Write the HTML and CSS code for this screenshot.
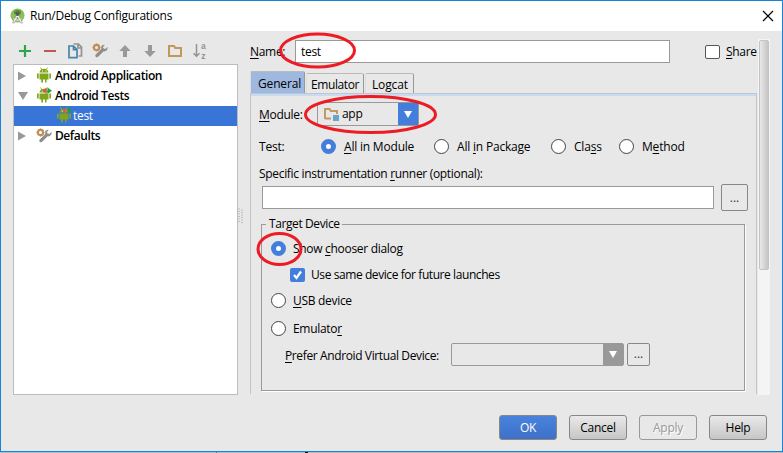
FILE: index.html
```
<!DOCTYPE html>
<html lang="en">
<head>
<meta charset="utf-8">
<title>Run/Debug Configurations</title>
<link rel="stylesheet" href="styles.css">
</head>
<body>
<svg class="symbols" width="0" height="0" aria-hidden="true">
  <symbol id="android" viewBox="0 0 16 16">
    <path d="M4.500 .5 6 3M11.500 .5 10 3" stroke="#97c024" stroke-width="1" fill="none"/>
    <path d="M3.500 5.600C3.500 .5 12.500 .5 12.500 5.600z" fill="#7ea51b"/>
    <path d="M6 4h1M9.500 4h1" stroke="#fff" stroke-width="1"/>
    <path d="M3.500 6.500h9v6h-2V15.500H9v-3H7v3H5.300v-3H3.500zM1 6.500h1.700v5H1zM13.300 6.500H15v5h-1.700z" fill="#7ea51b"/>
  </symbol>
  <symbol id="runmarks" viewBox="0 0 16 16">
    <path d="M10.500.5v6.500L6 3.800z" fill="#e05555"/>
    <path d="M11.500.5v6.500L16 3.800z" fill="#16a635"/>
  </symbol>
  <symbol id="tools" viewBox="0 0 16 16">
    <path d="M15.500 4 13.300 6 11.500 5.400 11 4 12.800 1.800C10 1.500 8.700 3.500 9.300 6L4 11.200c-2 1.900.5 4.300 2.400 2.400L11.700 8.300c2.500.5 4.500-1.500 3.800-4.300z" fill="#8d8d8d"/>
    <circle cx="4.500" cy="4.500" r="2.600" fill="none" stroke="#c09052" stroke-width="2.100"/>
    <path d="M4.500.5v1.500M4.500 7v1.500M.5 4.500H2M7 4.500h1.500M1.700 1.700l1 1M6.300 6.300l1 1M7.300 1.700l-1 1M2.700 6.300l-1 1" stroke="#c09052" stroke-width="1.500"/>
  </symbol>
</svg>

<div class="window">
  <header class="titlebar">
    <svg class="logo" width="15" height="16" viewBox="0 0 15 16">
      <circle cx="7.500" cy="7.500" r="7" fill="#8cbf5a"/>
      <path d="M4 3.500Q7.500 0 11 3.500V6H4z" fill="#598b42"/>
      <path d="M7.500 5 2.500 15h2L7.500 9l3 6h2z" fill="#f5f5f5" stroke="#777" stroke-width=".5"/>
      <circle cx="7.500" cy="6" r="2" fill="#555b55"/><path d="M3.500 11q4 2.500 8 0" fill="none" stroke="#eee"/>
    </svg>
    <h1 class="title">Run/Debug Configurations</h1>
    <svg class="close" width="12" height="12" viewBox="0 0 12 12"><path d="M1 1l10 10M11 1 1 11" stroke="#000" stroke-width="1.200"/></svg>
  </header>

  <div class="content">
    <aside class="side">
      <div class="toolbar">
        <svg width="16" height="16"><path d="M2 8h12M8 2v12" stroke="#2ea44a" stroke-width="2.200"/></svg>
        <svg width="16" height="16"><path d="M2 8h12" stroke="#c75450" stroke-width="2"/></svg>
        <svg width="16" height="16"><path d="M6.500 1h5L14.500 4v9h-3M11 1V5h3" fill="none" stroke="#929292" stroke-width="1.700"/><path d="M2 3h4.500L10 6.500v8.200H2zM6.500 3v3.700H10" fill="#e8e8e8" stroke="#4a83a8" stroke-width="1.700"/></svg>
        <svg width="16" height="16"><use href="#tools"/></svg>
        <svg width="16" height="16"><path d="M8 2l5.700 6H10v6H6V8H2.300z" fill="#999"/></svg>
        <svg width="16" height="16"><path d="M8 14 2.300 8H6V2h4v6h3.700z" fill="#999"/></svg>
        <svg width="16" height="16"><path d="M2 13V3h5l1.200 2H14v8z" fill="none" stroke="#c29858" stroke-width="2"/></svg>
        <svg class="sort" width="16" height="17"><path d="M4.500 1v12M1.500 10.300l3 3 3-3" fill="none" stroke="#929292" stroke-width="1.500"/><text x="9" y="6.300">a</text><text x="9.300" y="15.500">z</text></svg>
      </div>
      <ul class="tree">
        <li class="node"><svg class="twist" width="8" height="10"><path d="M0 .5 8 5 0 9.500z"/></svg><svg class="pic" width="16" height="16"><use href="#android"/></svg><span>Android Application</span></li>
        <li class="node"><svg class="twist" width="10" height="8"><path d="M0 0h10L5 8z"/></svg><svg class="pic" width="16" height="16"><use href="#android"/><use href="#runmarks"/></svg><span>Android Tests</span></li>
        <li class="node leaf"><svg class="pic" width="16" height="16"><use href="#android"/><use href="#runmarks"/></svg><span>test</span></li>
        <li class="node"><svg class="twist" width="8" height="10"><path d="M0 .5 8 5 0 9.500z"/></svg><svg width="16" height="16"><use href="#tools"/></svg><span>Defaults</span></li>
      </ul>
    </aside>

    <div class="grip"><svg width="5" height="16"><path d="M1 .5v15M4 1.500v15" stroke="#aaa" stroke-width="1.300" stroke-dasharray="1 1.500"/></svg></div>

    <main class="editor">
      <div class="form">
        <div class="name-row">
          <span class="name-label"><u>N</u>ame:</span>
          <div class="field name-field">test</div>
          <span class="check"></span><span class="share"><u>S</u>hare</span>
        </div>
        <nav class="tabs"><span class="tab active">General</span><span class="tab emu">Emulator</span><span class="tab log">Logcat</span></nav>
        <section class="pane">
          <div class="module-row">
            <span class="module-label"><u>M</u>odule:</span>
            <div class="combo module-combo">
              <svg class="folder" width="16" height="16"><path d="M2 13V3h4.500l1.300 2H14v3M2 12.500h6" fill="none" stroke="#c09a63" stroke-width="2"/><path d="M10 9h6v6h-6z" fill="#68a5c7"/></svg>
              <span>app</span><i class="drop"><svg width="8" height="7"><path d="M0 0h8L4 7z" fill="#fff"/></svg></i>
            </div>
          </div>
          <div class="test-row">
            <span class="test-label">Test:</span>
            <span class="option o1"><i class="radio on"></i><span><u>A</u>ll in Module</span></span>
            <span class="option o2"><i class="radio"></i><span>All <u>i</u>n Package</span></span>
            <span class="option o3"><i class="radio"></i><span>Cla<u>s</u>s</span></span>
            <span class="option o4"><i class="radio"></i><span>M<u>e</u>thod</span></span>
          </div>
          <div class="runner-label"><span>Specific instrumentation <u>r</u>unner (optional):</span></div>
          <div class="runner-row"><div class="field runner-field"></div><button class="browse">...</button></div>
          <fieldset class="device">
            <legend>Target Device</legend>
            <div class="choices">
              <div class="option"><i class="radio on"></i><span>Show <u>c</u>hooser dialog</span></div>
              <div class="option same"><i class="check checked"><svg width="15" height="14"><path d="M4 7l2.500 3L11 3.500" fill="none" stroke="#fff" stroke-width="2.200"/></svg></i><span>Use same device for future launches</span></div>
              <div class="option"><i class="radio"></i><span><u>U</u>SB device</span></div>
              <div class="option"><i class="radio"></i><span>Emulato<u>r</u></span></div>
            </div>
            <div class="avd-row">
              <span class="avd-label"><u>P</u>refer Android Virtual Device:</span>
              <div class="combo avd-combo"><i class="drop gray"><svg width="8" height="7"><path d="M0 0h8L4 7z" fill="#fff"/></svg></i></div>
              <button class="browse small">...</button>
            </div>
          </fieldset>
        </section>
      </div>
      <div class="scroll"><div class="thumb"></div></div>
    </main>
  </div>

  <footer class="actions">
    <button class="btn primary">OK</button><button class="btn">Cancel</button><button class="btn disabled">Apply</button><button class="btn">Help</button>
  </footer>
</div>
<div class="behind"></div>

<svg class="marks" width="783" height="453" viewBox="0 0 783 453" fill="none" stroke="#ed1c24" stroke-width="3">
  <ellipse cx="317.500" cy="50.500" rx="37" ry="16.500"/>
  <ellipse cx="370.500" cy="114.500" rx="65" ry="18"/>
  <ellipse cx="279.500" cy="249" rx="21.500" ry="15.500"/>
</svg>
</body>
</html>
```
FILE: styles.css
```
* { box-sizing: border-box; }
body { margin: 0; width: 783px; height: 453px; overflow: hidden; background: #b9bfc2; color: #000; font: 12px/16px "Open Sans", "Noto Sans", sans-serif; letter-spacing: -0.3px; white-space: nowrap; }
svg { display: block; flex: none; }
.symbols { position: absolute; }
u { text-decoration: underline; text-decoration-thickness: 1px; text-underline-offset: 2px; }
.window { width: 783px; height: 452px; border: 1px solid #1883d7; background: #e8e8e8; display: flex; flex-direction: column; }
.behind { height: 1px; background: linear-gradient(90deg, #aebfc3 216px, #5a7583 216px 217px, #aebfc3 217px 305px, #111 305px 308px, #b9b9b9 308px); }
.titlebar { height: 30px; background: #fff; display: flex; align-items: center; padding: 0 9px; }
.title { margin: 0 0 0 5px; flex: 1; font-size: 12px; font-weight: 400; line-height: 16px; letter-spacing: -0.27px; }
.close { margin-right: -1px; }
.content { height: 364px; display: flex; padding-left: 12px; }
.side { width: 225px; padding-top: 12px; }
.toolbar { display: flex; gap: 9px; height: 21px; padding-left: 4px; }
.sort { overflow: visible; }
.sort text { font: bold 8.500px "Liberation Sans", sans-serif; fill: #929292; }
.tree { list-style: none; margin: 0; padding: 1px 0 0; height: 331px; border: 1px solid #bcbcbc; background: #fff; }
.node { height: 20px; display: grid; grid-template-columns: 18px 16px 1fr; align-items: center; padding-left: 4px; font-weight: 600; letter-spacing: -0.42px; }
.node span { margin-left: 3px; }
.pic { margin-top: -2px; }
.twist { fill: #999; }
.leaf { background: #3875d7; color: #fff; padding-left: 42px; grid-template-columns: 16px 1fr; font-weight: 400; letter-spacing: -0.3px; }
.leaf span { margin-left: 1px; }
.grip { width: 12px; padding-top: 177px; }
.editor { width: 520px; padding-top: 8px; display: flex; gap: 1px; }
.form { width: 507px; }
.name-row { display: flex; align-items: center; height: 24px; padding-top: 1px; }
.name-label { width: 45px; }
.field { height: 23px; border: 1px solid #999; background: #fff; padding: 3px 5px; }
.name-field { width: 375px; }
.check { width: 15px; height: 14px; border: 1px solid #555; border-radius: 2px; background: #fff; flex: none; }
.name-row .check { margin-left: 35px; }
.share { margin-left: 6px; }
.tabs { display: flex; align-items: flex-end; gap: 1px; height: 30px; letter-spacing: -0.15px; }
.tab { height: 20px; padding: 3px 0 0 5px; border: 1px solid #aaa; border-width: 1px 1px 0; border-color: #bbb #999 #bbb #ddd; border-radius: 2px 2px 0 0; }
.tab.active { width: 55px; height: 22px; padding: 4px 0 0 7px; background: #9eb8e0; }
.tab.emu { width: 58px; padding-left: 4px; letter-spacing: -0.4px; }
.tab.log { width: 49px; padding-left: 6px; }
.pane { height: 301px; border: solid #c5c5c5; border-width: 1px 1px 0; box-shadow: inset 0 2px #c6dbf4; padding: 8px 8px 0; }
.module-row { height: 24px; display: flex; align-items: center; }
.module-label { width: 58px; padding-top: 1px; letter-spacing: -0.3px; }
.combo { height: 24px; border: 1px solid #999; border-radius: 2px; display: flex; align-items: center; }
.module-combo { width: 102px; padding-left: 5px; }
.module-combo span { margin-left: 3px; }
.drop { width: 20px; height: 22px; margin-left: auto; background: #447edc; display: grid; place-items: center; }
.drop.gray { background: #999; }
.test-row { display: flex; align-items: center; height: 41px; letter-spacing: -0.2px; }
.test-label { width: 62px; }
.option { display: flex; align-items: center; gap: 7px; }
.test-row .option { gap: 8px; }
.radio { width: 15px; height: 15px; border: 1px solid #444; border-radius: 50%; background: #fff; flex: none; }
.radio.on { border: 5px solid #447edc; }
.o1 { width: 113px; }
.o2 { width: 117px; }
.o3 { width: 68px; }
.runner-label { height: 17px; line-height: 14px; letter-spacing: -0.32px; }
.runner-row { display: flex; align-items: center; height: 27px; padding-left: 3px; gap: 7px; }
.runner-field { width: 452px; }
button { font: inherit; color: inherit; letter-spacing: inherit; padding: 0; }
.browse { width: 27px; height: 27px; border: 1px solid #888; border-radius: 2px; background: transparent; color: #333; letter-spacing: 0; line-height: 20px; }
.device { margin: 5px 0 0 2px; padding: 0 0 0 9px; width: 484px; height: 175px; min-width: 0; border: 1px solid #999; box-shadow: 1px 1px #fff; }
.device legend { margin-left: -5px; padding: 0 2px 0 3px; letter-spacing: -0.4px; }
.choices { display: grid; grid-template-rows: 33px 19px 33px 23px; align-items: center; }
.same { padding-left: 19px; gap: 6px; letter-spacing: -0.42px; }
.checked { border: 0; background: #447edc; }
.avd-row { display: flex; height: 24px; align-items: center; padding-left: 14px; margin-top: 2px; }
.avd-label { width: 166px; padding-top: 4px; letter-spacing: -0.38px; }
.avd-combo { width: 173px; height: 23px; }
.avd-combo .drop { height: 21px; }
.browse.small { width: 23px; height: 23px; margin-left: 3px; line-height: 16px; }
.scroll { width: 12px; height: 356px; background: #f4f4f4; padding: 1px 1px 0; }
.thumb { height: 230px; border: 1px solid #c4c4c4; border-radius: 2px; background: linear-gradient(90deg, #e8e8e8, #c5c5c5); }
.actions { display: flex; justify-content: flex-end; gap: 12px; padding: 20px 15px 0 0; }
.btn { width: 58px; height: 25px; border: 1px solid #888; border-radius: 3px; background: linear-gradient(#e9e9e9, #c6c6c6); }
.primary { background: linear-gradient(#4983de, #3e70c7); color: #fff; }
.disabled { background: #e8e8e8; color: #999; text-shadow: 1px 1px #fff; border-color: #999; }
.marks { position: absolute; left: 0; top: 0; }
```
